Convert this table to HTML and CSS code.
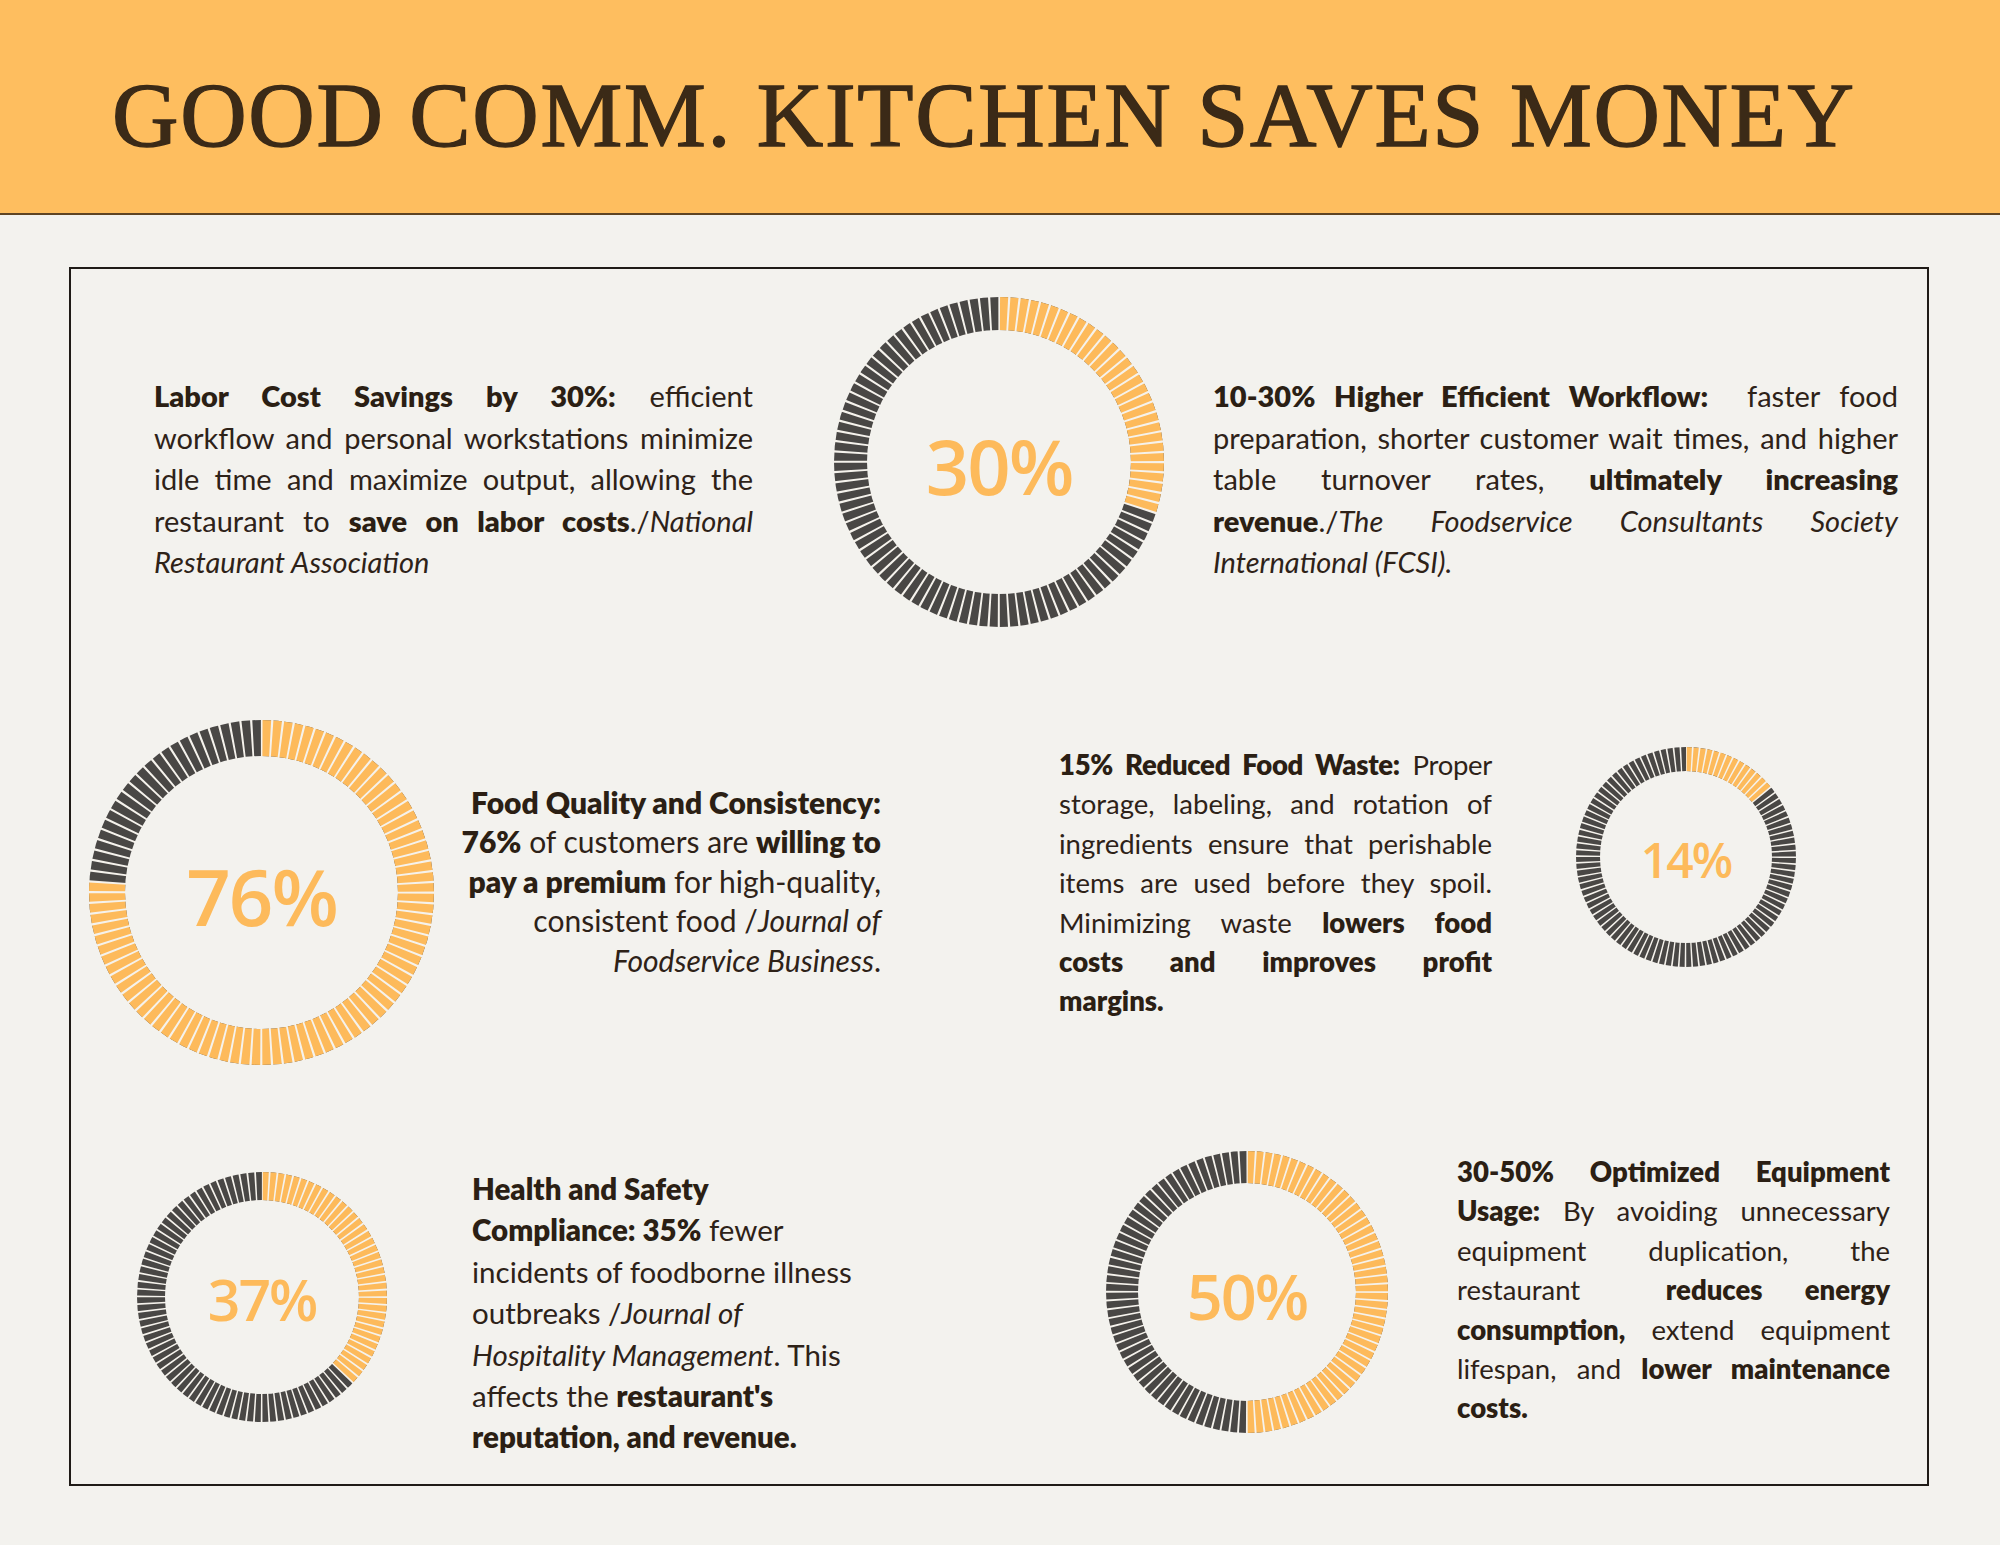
FILE: index.html
```html
<!DOCTYPE html>
<html lang="en">
<head>
<meta charset="utf-8">
<title>Good Comm. Kitchen Saves Money</title>
<link rel="stylesheet" href="styles.css">
</head>
<body>
<header class="hero">
  <h1 class="title">GOOD COMM. KITCHEN SAVES MONEY</h1>
</header>
<main class="board">
  <section class="row row-1">
    <div class="copy copy-big c1">
      <span class="j"><b>Labor Cost Savings by 30%:</b> efficient</span>
      <span class="j">workflow and personal workstations minimize</span>
      <span class="j">idle time and maximize output, allowing the</span>
      <span class="j">restaurant to <b>save on labor costs</b>./<i>National</i></span>
      <span class="l"><i>Restaurant Association</i></span>
    </div>
    <svg class="ring r30" width="330" height="330" viewBox="-165 -165 330 330">
      <g transform="rotate(-90)">
        <circle class="track" r="148.5" stroke-width="33"/>
        <circle class="fill" r="148.5" stroke-width="33" stroke-dasharray="279.92 1000"/>
        <circle class="gaps" r="148.5" stroke-width="35" stroke-dasharray="2 7.3305" stroke-dashoffset="1"/>
      </g>
      <text class="pct" x="0" y="3" font-size="76">30%</text>
    </svg>
    <div class="copy copy-big c2">
      <span class="j"><b>10-30% Higher Efficient Workflow:</b>&nbsp; faster food</span>
      <span class="j">preparation, shorter customer wait times, and higher</span>
      <span class="j">table turnover rates, <b>ultimately increasing</b></span>
      <span class="j"><b>revenue</b>./<i>The Foodservice Consultants Society</i></span>
      <span class="l"><i>International (FCSI).</i></span>
    </div>
  </section>

  <section class="row row-2">
    <svg class="ring r76" width="345" height="345" viewBox="-172.5 -172.5 345 345">
      <g transform="rotate(-90)">
        <circle class="track" r="154.5" stroke-width="36"/>
        <circle class="fill" r="154.5" stroke-width="36" stroke-dasharray="737.77 1000"/>
        <circle class="gaps" r="154.5" stroke-width="38" stroke-dasharray="2 7.7075" stroke-dashoffset="1"/>
      </g>
      <text class="pct" x="0" y="3" font-size="78">76%</text>
    </svg>
    <div class="copy copy-q c3">
      <b>Food Quality and Consistency:</b><br>
      <b>76%</b> of customers are <b>willing to</b><br>
      <b>pay a premium</b> for high-quality,<br>
      consistent food /<i>Journal of</i><br>
      <i>Foodservice Business</i>.
    </div>
    <div class="copy copy-sm c4">
      <span class="j tight"><b>15% Reduced Food Waste:</b> Proper</span>
      <span class="j">storage, labeling, and rotation of</span>
      <span class="j">ingredients ensure that perishable</span>
      <span class="j">items are used before they spoil.</span>
      <span class="j">Minimizing waste <b>lowers food</b></span>
      <span class="j"><b>costs and improves profit</b></span>
      <span class="l"><b>margins.</b></span>
    </div>
    <svg class="ring r14" width="220" height="220" viewBox="-110 -110 220 220">
      <g transform="rotate(-90)">
        <circle class="track" r="98" stroke-width="24"/>
        <circle class="fill" r="98" stroke-width="24" stroke-dasharray="86.2 1000"/>
        <circle class="gaps" r="98" stroke-width="26" stroke-dasharray="1.5 4.6575" stroke-dashoffset="0.75"/>
      </g>
      <text class="pct" x="0" y="2" font-size="48">14%</text>
    </svg>
  </section>

  <section class="row row-3">
    <svg class="ring r37" width="250" height="250" viewBox="-125 -125 250 250">
      <g transform="rotate(-90)">
        <circle class="track" r="111" stroke-width="28"/>
        <circle class="fill" r="111" stroke-width="28" stroke-dasharray="258.05 1000"/>
        <circle class="gaps" r="111" stroke-width="30" stroke-dasharray="1.6 5.3743" stroke-dashoffset="0.8"/>
      </g>
      <text class="pct" x="0" y="2" font-size="57">37%</text>
    </svg>
    <div class="copy copy-mid c5">
      <b>Health and Safety</b><br>
      <b>Compliance: 35%</b> fewer<br>
      incidents of foodborne illness<br>
      outbreaks /<i>Journal of</i><br>
      <i>Hospitality Management</i>. This<br>
      affects the <b>restaurant's</b><br>
      <b>reputation, and revenue.</b>
    </div>
    <svg class="ring r50" width="282" height="282" viewBox="-141 -141 282 282">
      <g transform="rotate(-90)">
        <circle class="track" r="125" stroke-width="32"/>
        <circle class="fill" r="125" stroke-width="32" stroke-dasharray="392.7 1000"/>
        <circle class="gaps" r="125" stroke-width="34" stroke-dasharray="1.7 6.154" stroke-dashoffset="0.85"/>
      </g>
      <text class="pct" x="0" y="3" font-size="63">50%</text>
    </svg>
    <div class="copy copy-sm c6">
      <span class="j"><b>30-50% Optimized Equipment</b></span>
      <span class="j"><b>Usage:</b> By avoiding unnecessary</span>
      <span class="j">equipment duplication, the</span>
      <span class="j">restaurant&nbsp; <b>reduces energy</b></span>
      <span class="j"><b>consumption,</b> extend equipment</span>
      <span class="j">lifespan, and <b>lower maintenance</b></span>
      <span class="l"><b>costs.</b></span>
    </div>
  </section>
</main>
</body>
</html>
```

FILE: styles.css
```css
* { box-sizing: border-box; }

html, body {
  margin: 0;
  padding: 0;
}

body {
  width: 2000px;
  height: 1545px;
  background: #f3f2ee;
  color: #2e2218;
  font-family: "Lato", "Open Sans", sans-serif;
  overflow: hidden;
}

.hero {
  height: 215px;
  background: #febe5f;
  border-bottom: 2px solid #5e4423;
  padding: 69px 0 0 112px;
}

.title {
  margin: 0;
  font-family: "Liberation Serif", "DejaVu Serif", serif;
  font-weight: 400;
  font-size: 92px;
  line-height: 92px;
  letter-spacing: 1.7px;
  color: #3b2a17;
  -webkit-text-stroke: 1.4px #3b2a17;
  white-space: nowrap;
}

.board {
  margin: 52px 0 0 69px;
  width: 1860px;
  height: 1219px;
  border: 2px solid #1f1b17;
}

.row {
  display: flex;
  align-items: flex-start;
}

.row-1 { padding-top: 28px; }

.copy b { font-weight: 800; color: #2b1f14; }
.copy i { font-style: italic; }

.copy .j {
  display: block;
  text-align: justify;
  text-align-last: justify;
}
.copy .l { display: block; }
.copy .tight { letter-spacing: -0.3px; }

.copy-big {
  font-size: 29px;
  line-height: 41.5px;
}
.copy-sm {
  font-size: 27.5px;
  line-height: 39.4px;
}
.copy-q {
  font-size: 30px;
  line-height: 39.4px;
}
.copy-mid {
  font-size: 29.5px;
  line-height: 41.4px;
}

.ring { display: block; flex: none; }
.ring circle { fill: none; }
.ring .track { stroke: #494745; }
.ring .fill { stroke: #fdba5b; }
.ring .gaps { stroke: #f5f2ec; }
.pct {
  fill: #fdba5b;
  font-family: "Open Sans", "Lato", sans-serif;
  font-weight: 600;
  text-anchor: middle;
  dominant-baseline: central;
  letter-spacing: -2px;
}

/* row 1 */
.c1 { width: 599px; margin: 78px 0 0 83px; }
.r30 { margin-left: 81px; }
.c2 { width: 685px; margin: 78px 0 0 49px; }

/* row 2 */
.r76 { margin: 93px 0 0 18px; }
.c3 { width: 450px; margin: 156px 0 0 -3px; text-align: right; }
.c4 { width: 433px; margin: 118px 0 0 178px; }
.r14 { margin: 120px 0 0 84px; }

/* row 3 */
.r37 { margin: 107px 0 0 66px; }
.c5 { width: 420px; margin: 103px 0 0 85px; }
.r50 { margin: 86px 0 0 214px; }
.c6 { width: 433px; margin: 87px 0 0 69px; }
```
